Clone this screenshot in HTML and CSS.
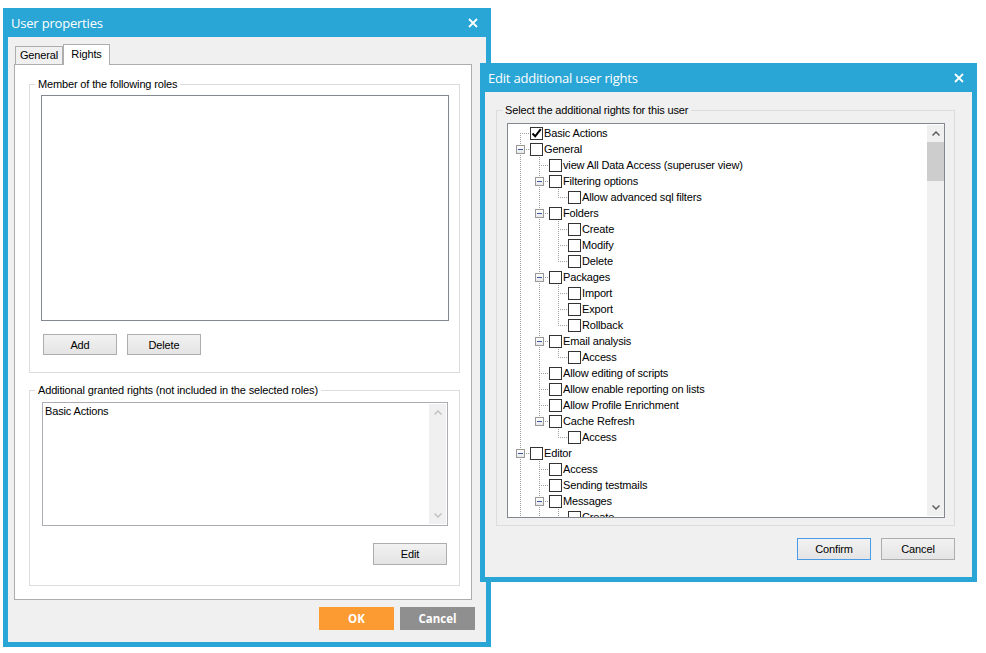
FILE: index.html
```html
<!DOCTYPE html>
<html lang="en">

<head>
    <meta charset="utf-8">
    <meta name="viewport" content="width=device-width, initial-scale=1.0">
    <title>User properties</title>
    <link rel="stylesheet" href="styles.css">
</head>

<body>
    <div class="window props">
        <div class="titlebar">
            <span>User properties</span>
            <svg class="close" viewBox="0 0 10 10"><path d="M1 1L9 9M9 1L1 9" /></svg>
        </div>
        <div class="win-body">
            <div class="tabs">
                <div class="tab">General</div>
                <div class="tab active">Rights</div>
            </div>
            <div class="tab-panel">
                <fieldset class="group">
                    <legend>Member of the following roles</legend>
                    <div class="listbox"></div>
                    <div class="buttons">
                        <button class="btn">Add</button>
                        <button class="btn">Delete</button>
                    </div>
                </fieldset>
                <fieldset class="group granted">
                    <legend>Additional granted rights (not included in the selected roles)</legend>
                    <div class="textbox">
                        <div class="textbox-text">Basic Actions</div>
                        <div class="scrollbar off">
                            <div class="sb-btn"><svg viewBox="0 0 8 5"><path d="M0.5 4.5L4 1L7.5 4.5" /></svg></div>
                            <div class="sb-track"></div>
                            <div class="sb-btn"><svg viewBox="0 0 8 5"><path d="M0.5 0.5L4 4L7.5 0.5" /></svg></div>
                        </div>
                    </div>
                    <div class="buttons end">
                        <button class="btn">Edit</button>
                    </div>
                </fieldset>
            </div>
            <div class="footer">
                <button class="flat ok">OK</button>
                <button class="flat cancel">Cancel</button>
            </div>
        </div>
    </div>

    <div class="window rights">
        <div class="titlebar">
            <span>Edit additional user rights</span>
            <svg class="close" viewBox="0 0 10 10"><path d="M1 1L9 9M9 1L1 9" /></svg>
        </div>
        <div class="win-body">
            <fieldset class="group">
                <legend>Select the additional rights for this user</legend>
                <div class="tree">
                    <div class="tree-rows">
                        <div class="node"><span class="ln first"></span><span class="cb checked"><svg viewBox="0 0 11 11"><path d="M1.5 5.5L4.2 8.3L9.8 1.2" /></svg></span>Basic Actions</div>
                        <div class="node"><span class="ln tee"><span class="exp"></span></span><span class="cb"></span>General</div>
                        <div class="node"><span class="ln pipe"></span><span class="ln tee"></span><span class="cb"></span>view All Data Access (superuser view)</div>
                        <div class="node"><span class="ln pipe"></span><span class="ln tee"><span class="exp"></span></span><span class="cb"></span>Filtering options</div>
                        <div class="node"><span class="ln pipe"></span><span class="ln pipe"></span><span class="ln end"></span><span class="cb"></span>Allow advanced sql filters</div>
                        <div class="node"><span class="ln pipe"></span><span class="ln tee"><span class="exp"></span></span><span class="cb"></span>Folders</div>
                        <div class="node"><span class="ln pipe"></span><span class="ln pipe"></span><span class="ln tee"></span><span class="cb"></span>Create</div>
                        <div class="node"><span class="ln pipe"></span><span class="ln pipe"></span><span class="ln tee"></span><span class="cb"></span>Modify</div>
                        <div class="node"><span class="ln pipe"></span><span class="ln pipe"></span><span class="ln end"></span><span class="cb"></span>Delete</div>
                        <div class="node"><span class="ln pipe"></span><span class="ln tee"><span class="exp"></span></span><span class="cb"></span>Packages</div>
                        <div class="node"><span class="ln pipe"></span><span class="ln pipe"></span><span class="ln tee"></span><span class="cb"></span>Import</div>
                        <div class="node"><span class="ln pipe"></span><span class="ln pipe"></span><span class="ln tee"></span><span class="cb"></span>Export</div>
                        <div class="node"><span class="ln pipe"></span><span class="ln pipe"></span><span class="ln end"></span><span class="cb"></span>Rollback</div>
                        <div class="node"><span class="ln pipe"></span><span class="ln tee"><span class="exp"></span></span><span class="cb"></span>Email analysis</div>
                        <div class="node"><span class="ln pipe"></span><span class="ln pipe"></span><span class="ln end"></span><span class="cb"></span>Access</div>
                        <div class="node"><span class="ln pipe"></span><span class="ln tee"></span><span class="cb"></span>Allow editing of scripts</div>
                        <div class="node"><span class="ln pipe"></span><span class="ln tee"></span><span class="cb"></span>Allow enable reporting on lists</div>
                        <div class="node"><span class="ln pipe"></span><span class="ln tee"></span><span class="cb"></span>Allow Profile Enrichment</div>
                        <div class="node"><span class="ln pipe"></span><span class="ln end"><span class="exp"></span></span><span class="cb"></span>Cache Refresh</div>
                        <div class="node"><span class="ln pipe"></span><span class="ln"></span><span class="ln end"></span><span class="cb"></span>Access</div>
                        <div class="node"><span class="ln tee"><span class="exp"></span></span><span class="cb"></span>Editor</div>
                        <div class="node"><span class="ln pipe"></span><span class="ln tee"></span><span class="cb"></span>Access</div>
                        <div class="node"><span class="ln pipe"></span><span class="ln tee"></span><span class="cb"></span>Sending testmails</div>
                        <div class="node"><span class="ln pipe"></span><span class="ln tee"><span class="exp"></span></span><span class="cb"></span>Messages</div>
                        <div class="node"><span class="ln pipe"></span><span class="ln pipe"></span><span class="ln tee"></span><span class="cb"></span>Create</div>
                    </div>
                    <div class="scrollbar">
                        <div class="sb-btn"><svg viewBox="0 0 8 5"><path d="M0.5 4.5L4 1L7.5 4.5" /></svg></div>
                        <div class="sb-track"><div class="sb-thumb"></div></div>
                        <div class="sb-btn"><svg viewBox="0 0 8 5"><path d="M0.5 0.5L4 4L7.5 0.5" /></svg></div>
                    </div>
                </div>
            </fieldset>
            <div class="buttons end">
                <button class="btn default">Confirm</button>
                <button class="btn">Cancel</button>
            </div>
        </div>
    </div>
</body>

</html>
```

FILE: styles.css
```css
* {
    box-sizing: border-box;
}

body {
    margin: 0;
    background: #fff;
    font-family: "Liberation Sans", Arial, sans-serif;
    font-size: 11px;
    letter-spacing: -0.15px;
    color: #000;
    --dv: repeating-linear-gradient(to bottom, #a0a0a0 0 1px, transparent 1px 2px);
    --dh: repeating-linear-gradient(to right, #a0a0a0 0 1px, transparent 1px 2px);
}

/* windows on the desktop */
.window {
    position: absolute;
    display: flex;
    flex-direction: column;
    background: #29a6d6;
}

.props {
    left: 3px;
    top: 8px;
    width: 488px;
    height: 639px;
}

.rights {
    left: 480px;
    top: 63px;
    width: 497px;
    height: 519px;
}

.titlebar {
    flex: none;
    height: 29px;
    display: flex;
    align-items: center;
    justify-content: space-between;
    padding: 0 13px 0 8px;
    color: #fff;
    font-family: "Open Sans", sans-serif;
    font-size: 13px;
    letter-spacing: -0.2px;
}

.close {
    width: 10px;
    height: 10px;
}

.close path {
    stroke: #fff;
    stroke-width: 1.8;
}

.win-body {
    flex: 1;
    margin: 0 5px 5px;
    background: #f0f0f0;
}

.props .win-body {
    padding: 7px 11px 0 6px;
}

.rights .win-body {
    padding: 11px 17px 0 11px;
}

/* tabs */
.tabs {
    display: flex;
    align-items: flex-end;
    margin-left: 1px;
}

.tab {
    width: 48px;
    height: 18px;
    border: 1px solid #adadad;
    border-bottom: none;
    background: #f0f0f0;
    text-align: center;
    line-height: 17px;
}

.tab.active {
    width: 47px;
    height: 21px;
    margin-bottom: -1px;
    background: #fff;
    line-height: 19px;
    position: relative;
    z-index: 1;
}

.tab-panel {
    height: 536px;
    margin-right: 3px;
    border: 1px solid #adadad;
    background: #fff;
    padding: 12px 0 0 14px;
}

/* group boxes */
.group {
    margin: 0;
    padding: 0;
    min-width: 0;
    border: 1px solid #dcdcdc;
}

.tab-panel .group {
    width: 431px;
}

.group legend {
    margin-left: 5px;
    padding: 0 3px;
    line-height: 14px;
}

.granted {
    margin-top: 10px;
}

.listbox {
    width: 408px;
    height: 226px;
    margin: 4px 0 0 11px;
    border: 1px solid #828790;
    background: #fff;
}

.textbox {
    display: flex;
    width: 406px;
    height: 124px;
    margin: 5px 0 0 12px;
    border: 1px solid #abadb3;
    background: #fff;
}

.textbox-text {
    flex: 1;
    padding: 2px 2px;
}

.buttons {
    display: flex;
    gap: 10px;
    margin: 13px 0 17px 13px;
}

.buttons.end {
    justify-content: flex-end;
    margin: 17px 12px 20px 0;
}

.rights .buttons.end {
    margin: 12px 0 0 0;
}

.btn {
    width: 74px;
    height: 21px;
    padding: 0;
    border: 1px solid #adadad;
    background: linear-gradient(#f2f2f2, #e4e4e4);
    font: inherit;
    letter-spacing: inherit;
    color: #000;
}

.buttons.end .btn {
    height: 22px;
}

.btn.default {
    border-color: #4a9be6;
}

.footer {
    display: flex;
    justify-content: flex-end;
    gap: 6px;
    margin-top: 7px;
}

.flat {
    width: 75px;
    height: 23px;
    border: none;
    padding: 0;
    color: #fff;
    font-family: "Open Sans", sans-serif;
    font-weight: bold;
    font-size: 11.5px;
    letter-spacing: 0;
}

.ok {
    background: #fd9b33;
}

.cancel {
    background: #8f8f8f;
}

/* scrollbars */
.scrollbar {
    flex: none;
    width: 17px;
    display: flex;
    flex-direction: column;
    background: #f0f0f0;
    margin: 1px 1px 1px 0;
}

.tree .scrollbar {
    margin: 1px 0;
}

.sb-btn {
    height: 17px;
    display: flex;
    align-items: center;
    justify-content: center;
}

.sb-btn svg {
    width: 8px;
    height: 5px;
}

.sb-btn path {
    fill: none;
    stroke: #606060;
    stroke-width: 1.5;
}

.scrollbar.off path {
    stroke: #c2c2c2;
}

.sb-track {
    flex: 1;
}

.sb-thumb {
    height: 39px;
    background: #cdcdcd;
}

/* tree view */
.tree {
    display: flex;
    height: 395px;
    margin: 6px 9px 7px 10px;
    border: 1px solid #828790;
    background: #fff;
}

.tree-rows {
    flex: 1;
    overflow: hidden;
    padding: 1px 0 0 3px;
}

.node {
    display: flex;
    align-items: center;
    height: 16px;
    white-space: nowrap;
}

.ln {
    flex: none;
    width: 19px;
    height: 16px;
    display: flex;
    align-items: center;
}

.ln.pipe {
    background: var(--dv) 9px 0 / 1px 16px no-repeat;
}

.ln.tee {
    background: var(--dh) 9px 8px / 10px 1px no-repeat, var(--dv) 9px 0 / 1px 16px no-repeat;
}

.ln.end {
    background: var(--dh) 9px 8px / 10px 1px no-repeat, var(--dv) 9px 0 / 1px 9px no-repeat;
}

.ln.first {
    background: var(--dh) 9px 8px / 10px 1px no-repeat, var(--dv) 9px 8px / 1px 8px no-repeat;
}

.exp {
    width: 9px;
    height: 9px;
    margin-left: 5px;
    border: 1px solid #999;
    background: linear-gradient(#fff, #e8e8e8);
    display: flex;
    align-items: center;
    justify-content: center;
}

.exp::before {
    content: "";
    width: 5px;
    height: 1px;
    background: #3c5a9a;
}

.cb {
    flex: none;
    width: 13px;
    height: 13px;
    margin-right: 1px;
    border: 1px solid #333;
    background: #fff;
}

.cb svg {
    display: block;
    width: 11px;
    height: 11px;
}

.cb path {
    fill: none;
    stroke: #000;
    stroke-width: 2;
}
```
